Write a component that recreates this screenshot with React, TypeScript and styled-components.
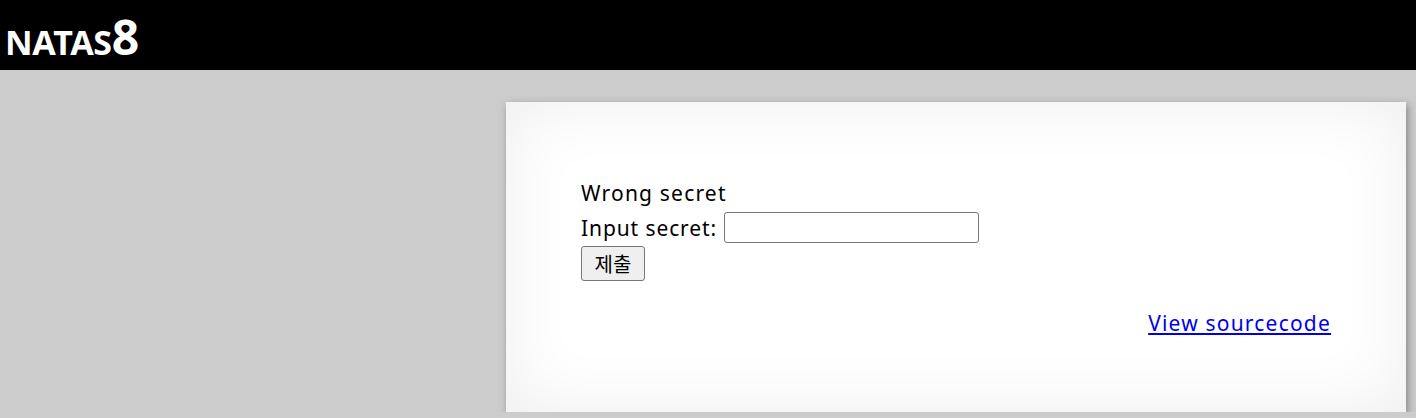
import styled, { createGlobalStyle } from 'styled-components';

const GlobalStyle = createGlobalStyle`
  html, body {
    margin: 0;
    padding: 0;
    background: #cccccc;
    font-family: 'Noto Sans', 'Noto Sans CJK KR', sans-serif;
  }
`;

const Header = styled.header`
  height: 70px;
  background: #000;
  color: #fff;
  display: flex;
  align-items: flex-end;
  padding-left: 5px;
  box-sizing: border-box;
`;

const Title = styled.h1`
  margin: 0 0 9px 0;
  font-size: 34px;
  font-weight: 700;
  line-height: 1;
  letter-spacing: -0.3px;
`;

const Level = styled.span`
  font-size: 48px;
  letter-spacing: 0;
`;

const Content = styled.main`
  width: 900px;
  box-sizing: border-box;
  margin: 32px 10px 0 auto;
  padding: 75px;
  background: #fff;
  box-shadow: inset 0 0 70px rgba(0, 0, 0, 0.07), 2px 3px 8px rgba(0, 0, 0, 0.35);
  font-size: 21px;
  letter-spacing: 1.2px;
  color: #000;
`;

const Message = styled.div`
  line-height: 33px;
`;

const Form = styled.form`
  display: flex;
  flex-direction: column;
  align-items: flex-start;
`;

const Row = styled.div`
  height: 36px;
  display: flex;
  align-items: center;
  gap: 7px;
`;

const Label = styled.label`
  letter-spacing: 0.9px;
`;

const Input = styled.input`
  width: 255px;
  height: 31px;
  box-sizing: border-box;
  border: 1px solid #767676;
  border-radius: 3px;
  padding: 1px 2px;
  font-size: 16px;
  margin-top: -1px;
`;

const Submit = styled.button`
  width: 64px;
  height: 35px;
  box-sizing: border-box;
  background: #efefef;
  border: 1px solid #767676;
  border-radius: 3px;
  font-family: 'Noto Sans CJK KR', sans-serif;
  font-size: 20px;
  letter-spacing: 0;
  color: #000;
  padding: 0;
`;

const Footer = styled.div`
  margin-top: 28px;
  text-align: right;
  line-height: 28px;
`;

const Link = styled.a`
  color: #0000ee;
  text-decoration: underline;
`;

export default function App() {
  return (
    <>
      <GlobalStyle />
      <Header>
        <Title>
          NATAS<Level>8</Level>
        </Title>
      </Header>
      <Content>
        <Message>Wrong secret</Message>
        <Form onSubmit={(e) => e.preventDefault()}>
          <Row>
            <Label htmlFor="secret">Input secret:</Label>
            <Input id="secret" name="secret" type="text" />
          </Row>
          <Submit type="submit">제출</Submit>
        </Form>
        <Footer>
          <Link href="#">View sourcecode</Link>
        </Footer>
      </Content>
    </>
  );
}
